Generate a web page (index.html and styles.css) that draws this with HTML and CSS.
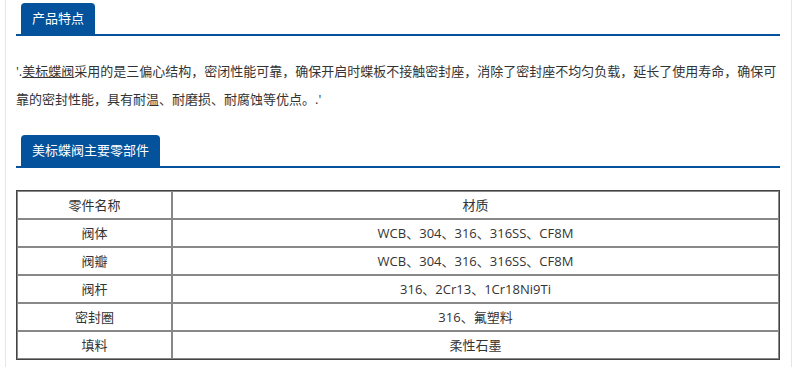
FILE: index.html
```html
<!DOCTYPE html>
<html lang="zh-CN">
<head>
<meta charset="utf-8">
<link rel="stylesheet" href="styles.css">
</head>
<body>
<div class="page">
  <div class="sec-head"><span class="tab">产品特点</span></div>
  <p class="desc">'.<span class="link">美标蝶阀</span>采用的是三偏心结构，密闭性能可靠，确保开启时蝶板不接触密封座，消除了密封座不均匀负载，延长了使用寿命，确保可靠的密封性能，具有耐温、耐磨损、耐腐蚀等优点。.'</p>
  <div class="sec-head"><span class="tab">美标蝶阀主要零部件</span></div>
  <table class="parts">
    <tr><td class="c1">零件名称</td><td>材质</td></tr>
    <tr><td class="c1">阀体</td><td>WCB、304、316、316SS、CF8M</td></tr>
    <tr><td class="c1">阀瓣</td><td>WCB、304、316、316SS、CF8M</td></tr>
    <tr><td class="c1">阀杆</td><td>316、2Cr13、1Cr18Ni9Ti</td></tr>
    <tr><td class="c1">密封圈</td><td>316、氟塑料</td></tr>
    <tr><td class="c1">填料</td><td>柔性石墨</td></tr>
  </table>
</div>
</body>
</html>
```
FILE: styles.css
```css
html, body {
  margin: 0;
  padding: 0;
  background: #fff;
}
body {
  font-family: "Open Sans", "Noto Sans CJK SC", sans-serif;
  color: #333;
}
.page {
  margin-left: 5px;
  width: 764px;
  padding: 3px 11px 8px 10px;
  border-left: 1px solid #e6e6e6;
  border-right: 1px solid #e6e6e6;
  min-height: 356px;
}
.sec-head {
  border-bottom: 2px solid #04529c;
  padding-left: 5px;
  height: 31px;
  display: flex;
  align-items: flex-end;
}
.tab {
  display: block;
  background: #04529c;
  color: #fff;
  font-size: 13px;
  line-height: 31px;
  height: 31px;
  padding: 0 11px;
  border-radius: 4px 4px 0 0;
}
.desc {
  margin: 21px 0 22px;
  font-size: 13px;
  line-height: 28px;
}
.link {
  text-decoration: underline;
}
.parts {
  margin-top: 22px;
  width: 764px;
  border-collapse: separate;
  border-spacing: 0;
  border: 1px solid #444;
  font-size: 13px;
}
.parts td {
  border: 1px solid #888;
  height: 26px;
  padding: 0;
  text-align: center;
  line-height: 26px;
}
.parts td.c1 {
  width: 153px;
}
```
